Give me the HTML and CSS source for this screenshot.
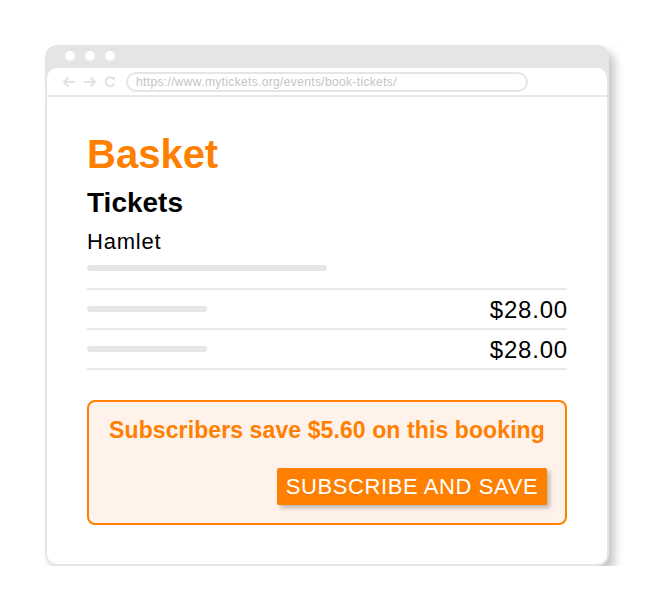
FILE: index.html
```html
<!DOCTYPE html>
<html>
<head>
<meta charset="utf-8">
<link rel="stylesheet" href="styles.css">
</head>
<body>
<div class="stage">
  <div class="window">
    <div class="titlebar">
      <span class="dot"></span><span class="dot"></span><span class="dot"></span>
    </div>
    <div class="panel">
      <div class="toolbar">
        <div class="nav">
          <svg width="14" height="12" viewBox="0 0 14 12"><path d="M13 6H2M6.5 1.5L2 6l4.5 4.5" fill="none" stroke="#e2e2e2" stroke-width="2"/></svg>
          <svg width="14" height="12" viewBox="0 0 14 12"><path d="M1 6h11M7.5 1.5L12 6l-4.5 4.5" fill="none" stroke="#e2e2e2" stroke-width="2"/></svg>
          <svg width="12" height="12" viewBox="0 0 12 12"><path d="M10.2 7.5A4.4 4.4 0 1 1 9.4 2.8" fill="none" stroke="#e2e2e2" stroke-width="2"/><path d="M7 1.2h4v4z" fill="#e2e2e2"/></svg>
        </div>
        <div class="address">https://www.mytickets.org/events/book-tickets/</div>
      </div>
      <div class="content">
        <h1 class="title">Basket</h1>
        <h2 class="subtitle">Tickets</h2>
        <div class="show">Hamlet</div>
        <div class="bar bar-long"></div>
        <div class="rows">
          <div class="row"><div class="bar bar-short"></div><div class="price">$28.00</div></div>
          <div class="row"><div class="bar bar-short"></div><div class="price">$28.00</div></div>
        </div>
        <div class="promo">
          <div class="promo-text">Subscribers save $5.60 on this booking</div>
          <div class="promo-actions"><button class="cta">SUBSCRIBE AND SAVE</button></div>
        </div>
      </div>
    </div>
  </div>
</div>
</body>
</html>
```
FILE: styles.css
```css
* { box-sizing: border-box; }
body { margin: 0; background: #fff; font-family: "Liberation Sans", Arial, sans-serif; }
.stage { padding: 45px 0 0 45px; }
.window {
  width: 564px; height: 521px;
  background: #e5e5e5;
  border-radius: 12px;
  padding: 0 2px 2px 2px;
  display: flex; flex-direction: column;
  box-shadow: 6px 6px 8px rgba(0,0,0,0.22);
}
.titlebar { height: 23px; display: flex; align-items: center; gap: 10px; padding-left: 18px; padding-bottom: 1px; }
.dot { width: 10px; height: 10px; border-radius: 50%; background: #fff; }
.panel { flex: 1; background: #fff; border-radius: 10px; display: flex; flex-direction: column; }
.toolbar { height: 29px; border-bottom: 2px solid #e8e8e8; display: flex; align-items: center; padding-left: 15px; }
.nav { display: flex; align-items: center; gap: 7px; width: 64px; }
.address {
  width: 402px; height: 20px;
  border: 2px solid #e5e5e5; border-radius: 10px;
  font-size: 12px; color: #c4c4c4; line-height: 16px; padding-left: 8px; letter-spacing: 0.35px;
}
.content { padding: 0 40px 0 40px; display: flex; flex-direction: column; }
.title { margin: 34px 0 0; font-size: 40px; line-height: 46px; font-weight: 700; color: #ff8000; }
.subtitle { margin: 10px 0 0; font-size: 28px; line-height: 32px; font-weight: 700; color: #000; }
.show { margin-top: 10px; font-size: 22px; line-height: 26px; color: #000; letter-spacing: 0.8px; }
.bar { height: 6px; border-radius: 3px; background: #e6e6e6; }
.bar-long { width: 240px; margin-top: 10px; }
.bar-short { width: 120px; }
.rows { margin-top: 17px; border-top: 2px solid #e8e8e8; }
.row { height: 40px; border-bottom: 2px solid #e8e8e8; display: flex; align-items: center; justify-content: space-between; }
.price { font-size: 24px; color: #000; letter-spacing: 0.8px; padding-top: 1px; margin-right: -1px; }
.promo {
  margin-top: 30px; height: 125px;
  border: 2px solid #ff8000; border-radius: 8px;
  background: #fff2eb;
  display: flex; flex-direction: column; align-items: center;
}
.promo-text { margin-top: 15px; font-size: 23px; line-height: 26px; font-weight: 700; color: #ff8000; letter-spacing: 0.1px; }
.promo-actions { align-self: stretch; display: flex; justify-content: flex-end; padding-right: 18px; margin-top: 25px; }
.cta {
  width: 270px; height: 37px; border: 0; border-radius: 2px;
  background: #ff8000; color: #fff;
  font-family: "Liberation Sans", Arial, sans-serif; font-size: 22px; letter-spacing: 0.6px;
  box-shadow: 3px 3px 4px rgba(0,0,0,0.25);
  padding: 0;
}
```
